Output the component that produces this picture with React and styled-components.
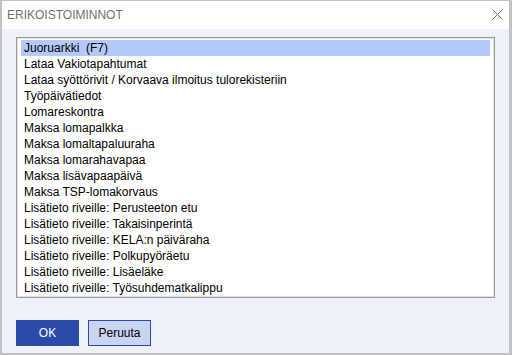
import React from 'react';
import styled, { createGlobalStyle } from 'styled-components';

// ─────────────────────────────────────────────────────────────────────────────
// global
// ─────────────────────────────────────────────────────────────────────────────

const Global = createGlobalStyle`
  html, body {
    margin: 0;
    padding: 0;
    background: #ffffff;
  }
  body {
    font-family: "Liberation Sans", Arial, sans-serif;
  }
`;

// ─────────────────────────────────────────────────────────────────────────────
// window
// ─────────────────────────────────────────────────────────────────────────────

const Window = styled.div`
  box-sizing: border-box;
  width: 512px;
  height: 355px;
  display: flex;
  flex-direction: column;
  border-style: solid;
  border-color: #c2c2c6;
  border-width: 1px 3px 2px 2px;
  background: #eef1fa;
`;

const TitleBar = styled.div`
  height: 28px;
  flex: none;
  display: flex;
  align-items: center;
  justify-content: space-between;
  padding: 0 6px 0 5px;
  background: #ffffff;
`;

const Title = styled.span`
  font-size: 12px;
  color: #717171;
  letter-spacing: 0;
`;

const Close = styled.button`
  border: 0;
  padding: 0;
  margin: 0;
  width: 11px;
  height: 11px;
  background: none;
  display: flex;
  margin-top: -1px;
`;

const Body = styled.div`
  flex: 1;
  display: flex;
  flex-direction: column;
  padding: 8px 14px 7px 14px;
`;

// ─────────────────────────────────────────────────────────────────────────────
// list
// ─────────────────────────────────────────────────────────────────────────────

const List = styled.ul`
  box-sizing: border-box;
  height: 261px;
  margin: 0;
  padding: 2px 4px;
  list-style: none;
  background: #ffffff;
  border: 1px solid #9c9c9c;
  box-shadow: inset 0 0 0 1px #e0e0e0;
  overflow: hidden;
`;

const Item = styled.li`
  height: 16px;
  line-height: 16px;
  padding-left: 3px;
  font-size: 12px;
  color: #000000;
  white-space: pre;
  background: ${({ selected }) => (selected ? '#b4c8fa' : 'transparent')};
`;

// ─────────────────────────────────────────────────────────────────────────────
// buttons
// ─────────────────────────────────────────────────────────────────────────────

const Buttons = styled.div`
  display: flex;
  gap: 9px;
  margin-top: 22px;
`;

const Button = styled.button`
  box-sizing: border-box;
  width: 63px;
  height: 26px;
  padding: 0;
  font-family: "Liberation Sans", Arial, sans-serif;
  font-size: 12px;
  border: 1px solid #2c4aa9;
  background: ${({ primary }) => (primary ? '#2c4aa9' : '#c9d4f0')};
  color: ${({ primary }) => (primary ? '#ffffff' : '#000000')};
`;

const items = [
  'Juoruarkki  (F7)',
  'Lataa Vakiotapahtumat',
  'Lataa syöttörivit / Korvaava ilmoitus tulorekisteriin',
  'Työpäivätiedot',
  'Lomareskontra',
  'Maksa lomapalkka',
  'Maksa lomaltapaluuraha',
  'Maksa lomarahavapaa',
  'Maksa lisävapaapäivä',
  'Maksa TSP-lomakorvaus',
  'Lisätieto riveille: Perusteeton etu',
  'Lisätieto riveille: Takaisinperintä',
  'Lisätieto riveille: KELA:n päiväraha',
  'Lisätieto riveille: Polkupyöräetu',
  'Lisätieto riveille: Lisäeläke',
  'Lisätieto riveille: Työsuhdematkalippu',
];

export default function App() {
  return (
    <>
      <Global />
      <Window>
        <TitleBar>
          <Title>ERIKOISTOIMINNOT</Title>
          <Close aria-label="Sulje">
            <svg width="11" height="11" viewBox="0 0 11 11">
              <path d="M0.5 0.5 L10.5 10.5 M10.5 0.5 L0.5 10.5" stroke="#6e6e6e" strokeWidth="1" fill="none" />
            </svg>
          </Close>
        </TitleBar>
        <Body>
          <List>
            {items.map((text, i) => (
              <Item key={text} selected={i === 0}>{text}</Item>
            ))}
          </List>
          <Buttons>
            <Button primary>OK</Button>
            <Button>Peruuta</Button>
          </Buttons>
        </Body>
      </Window>
    </>
  );
}
